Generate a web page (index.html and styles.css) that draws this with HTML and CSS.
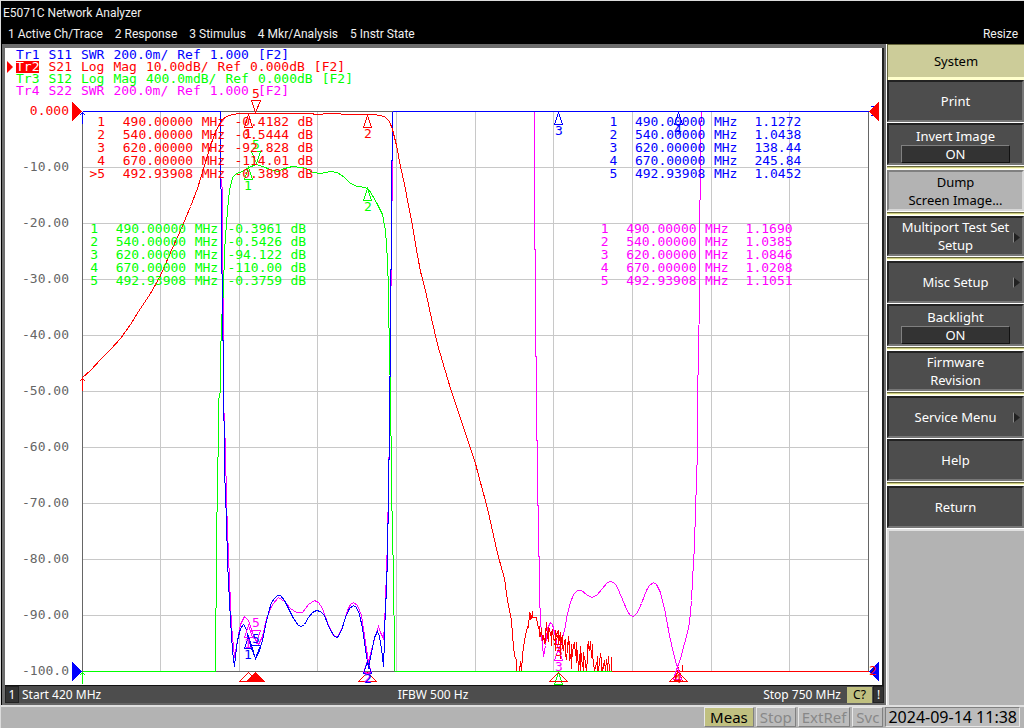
FILE: index.html
```html
<!DOCTYPE html>
<html lang="en">
<head>
<meta charset="utf-8">
<title>E5071C Network Analyzer</title>
<link rel="stylesheet" href="styles.css">
</head>
<body>
<div class="app">
<header class="top">
  <h1 class="title">E5071C Network Analyzer</h1>
  <nav class="menubar">
    <button>1 Active Ch/Trace</button>
    <button>2 Response</button>
    <button>3 Stimulus</button>
    <button>4 Mkr/Analysis</button>
    <button>5 Instr State</button>
    <button class="resize">Resize</button>
  </nav>
</header>

<div class="work">
  <main class="display">
    <div class="chart">
      <svg class="plot" viewBox="5 48 877 637" role="img" aria-label="S-parameter traces, 420 MHz to 750 MHz">
        <g class="labels">
          <text class="red" x="69" y="115">0.000</text>
          <text x="69" y="171">-10.00</text>
          <text x="69" y="227">-20.00</text>
          <text x="69" y="283">-30.00</text>
          <text x="69" y="339">-40.00</text>
          <text x="69" y="395">-50.00</text>
          <text x="69" y="451">-60.00</text>
          <text x="69" y="507">-70.00</text>
          <text x="69" y="563">-80.00</text>
          <text x="69" y="619">-90.00</text>
          <text x="69" y="675">-100.0</text>
        </g>
        <g class="lines" transform="translate(.5 .5)">
          <path class="grid" d="M160 111V671M239 111V671M317 111V671M396 111V671M475 111V671M553 111V671M632 111V671M711 111V671M789 111V671M82 167H868M82 223H868M82 279H868M82 335H868M82 391H868M82 447H868M82 503H868M82 559H868M82 615H868"/>
          <path class="frame" d="M82 111V671M868 111V671M220 111H392M215 671H394"/>

          <path class="magenta" d="M220 111V175L222 190V270L223 300V400L225 450 226 500 227 530 229 580 231 625 234 657 237 640 240 624 244 616 248 620 252 632 256 641 258 644 262 636 266 618 272 604 278 597 284 601 290 608 296 612 302 612 308 604 314 600 318 602 322 608 328 625 333 635 337 637 342 627 347 610 350 604 353 602 357 605 361 615 364 635 368 662 371 650 375 635 378 626 380 632 383 638 384 625 385 600 387 540 389 430 390 330 392 159V111"/>
          <path class="magenta" d="M534 111V249H535V356H536V440H537V505H538V556H539V596L540 618 541 635 543 656 545 645 547 628 550 622 552 624 555 636 558 650 561 642 564 630 567 613 570 602 573 594 577 590 581 590 586 594 591 597 596 595 602 588 607 582 610 581 613 582 616 585 622 599 627 611 630 615 633 616 637 612 641 603 646 590 649 585 653 582 656 584 660 592 664 608 669 635 674 657 677 667 680 658 684 643 687 632 689 622 691 600 692 580 694 545 695 510 697 450V400L699 300V210L700 190V130L701 111"/>
          <path class="green" d="M215 671V608L216 607V540L218 430V400L220 390V360L221 322 223 290 224 250 227 210 229 190 232 177 236 173 242 171 248 167 256 164 262 166 270 169 277 171 284 168 292 166 300 167 306 168 312 172 320 173 330 171 337 172 344 177 350 183 357 186 365 187 369 190 376 202 382 214 385 230 387 260 388 290V307L389 347 390 401 391 468 392 552 393 556 394 671"/>
          <path class="blue" d="M220 111V187L221 190V272L222 275V340H223V420L224 421V470L226 520 227 560 228 582 229 600 230 620 232 650 234 666 235 655 237 640 240 628 243 624 245 627 248 638 251 648 255 658 259 650 262 640 265 625 268 612 271 602 274 598 277 595 280 595 284 600 288 608 293 618 298 625 301 626 304 624 308 617 312 612 316 610 320 611 324 615 329 628 334 636 337 637 341 630 345 617 349 608 353 605 356 607 359 614 362 628 365 649 368 668 371 652 374 637 377 631 379 636 381 648 383 666 384 640 385 600 386 596V571H387V523H388V459H389V376H390V269H391V160H392V111"/>
          <path class="red" d="M82 377L90 370 100 359 110 349 120 338 130 324 138 311 150 293 160 275 170 252 180 230 190 206 197 188 204 165 210 145 216 129 222 119 226 116 232 114 240 113H310L316 114 330 113 350 114H374L384 116 389 121 392 129 396 145 400 166 404 184 408 205 412 225 417 255 420 271 425 290 431 318 437 344 450 388 463 427 475 463 477 471 487 508 493 535 497 553 504 578 507 600 511 620 512 635 514 655 516 660V671H519L520 661 521 671 522 655 523 646 525 635 527 626 528 627 529 612 530 613 531 618 532 611V617H536L537 624 539 630 540 636 541 628 542 640 543 635 544 643 546 622 547 638 549 628 550 634 552 630 553 639 555 640 556 634 558 630V644L560 632 561 640 563 650 564 640 566 659 568 636 569 652 571 660 573 645 574 642 575 655 577 650 578 671 580 648 582 666 584 656 586 671 588 641 589 650 590 641 591 657 592 654 594 671 596 662 598 670 600 653 602 671 604 660 605 671 606 659 607 670 608 656 609 671M682 664V671M530 612V619M545 630V642M560 636V658M571 643V668M576 641V662M583 651V671M601 656V671"/>
          <path class="red" d="M539 625V636M548 626V641M551 631V645M555 629V650M562 634V648M565 638V656M569 640V660M580 645V671M587 643V660M592 643V658M597 655V671M611 656V671"/>
          <g class="limits">
            <path class="blue" d="M82 111H220M392 111H868"/>
            <path class="green" d="M82 671H215M394 671H611"/>
            <path class="red" d="M611 671H868"/>
          </g>

          <path class="red" d="M248 114L244 127H252ZM251 100H260L255 112ZM367 115L363 127H371ZM558 633L554 644H562ZM678 668L674 681H682Z"/>
          <path class="green" d="M251 151H260L256 163ZM248 167L244 179H252ZM367 188L363 200H371ZM558 672L554 684H562Z"/>
          <path class="magenta" d="M251 630H260L256 642ZM248 625L244 637H252ZM367 660L363 672H371ZM558 648L554 660H562ZM677 666L673 679H681Z"/>
          <path class="blue" d="M251 645H260L255 658ZM248 636L244 648H252ZM367 661L363 673H371ZM558 112L554 124H562ZM678 112L674 124H682Z"/>
          <path class="red" d="M248 672L239 681H257ZM367 672L358 681H376ZM558 672L549 681H567ZM678 672L669 681H687Z"/>
          <path class="fill-red" d="M255 672L246 681H264Z"/>
          <path class="blue" d="M82 123V111M79 115L82 112 85 115M870 106H873M870 115H873"/>
          <path class="fill-red" d="M72 102L81 111 72 120ZM878 102L869 111 878 120Z"/>
          <path class="fill-blue" d="M72 662L81 671 72 680ZM878 662L869 671 878 680Z"/>
          <path class="green" d="M82 683V671M79 675L82 672 85 675"/>
          <path class="red" d="M82 390V378M79 381L82 378 85 381"/>
        </g>
        <g class="marks">
          <text class="red" x="256" y="98">5</text>
          <text class="red" x="248" y="138">1</text>
          <text class="red" x="368" y="138">2</text>
          <text class="red" x="559" y="656">3</text>
          <text class="red" x="678" y="683">4</text>
          <text class="red" x="873" y="675">2</text>
          <text class="green" x="256" y="149">5</text>
          <text class="green" x="248" y="190">1</text>
          <text class="green" x="368" y="211">2</text>
          <text class="magenta" x="256" y="627">5</text>
          <text class="magenta" x="248" y="648">1</text>
          <text class="magenta" x="368" y="682">2</text>
          <text class="magenta" x="559" y="671">3</text>
          <text class="blue" x="256" y="643">5</text>
          <text class="blue" x="248" y="659">1</text>
          <text class="blue" x="368" y="683">2</text>
          <text class="blue" x="559" y="135">3</text>
          <text class="blue" x="678" y="134">4</text>
        </g>
      </svg>

      <ul class="traces">
        <li class="blue"><span>Tr1</span> <span>S11</span> <span>SWR</span> <span>200.0m/</span> <span>Ref</span> <span>1.000</span> <span>[F2]</span></li>
        <li class="red active"><span>Tr2</span> <span>S21</span> <span>Log</span> <span>Mag</span> <span>10.00dB/</span> <span>Ref</span> <span>0.000dB</span> <span>[F2]</span></li>
        <li class="green"><span>Tr3</span> <span>S12</span> <span>Log</span> <span>Mag</span> <span>400.0mdB/</span> <span>Ref</span> <span>0.000dB</span> <span>[F2]</span></li>
        <li class="magenta"><span>Tr4</span> <span>S22</span> <span>SWR</span> <span>200.0m/</span> <span>Ref</span> <span>1.000</span> <span>[F2]</span></li>
      </ul>

      <table class="markers at-s21 red">
        <tr><td>1</td><td>490.00000</td><td>MHz</td><td>-0.4182</td><td>dB</td></tr>
        <tr><td>2</td><td>540.00000</td><td>MHz</td><td>-0.5444</td><td>dB</td></tr>
        <tr><td>3</td><td>620.00000</td><td>MHz</td><td>-92.828</td><td>dB</td></tr>
        <tr><td>4</td><td>670.00000</td><td>MHz</td><td>-114.01</td><td>dB</td></tr>
        <tr><td>&gt;5</td><td>492.93908</td><td>MHz</td><td>-0.3898</td><td>dB</td></tr>
      </table>
      <table class="markers at-s12 green">
        <tr><td>1</td><td>490.00000</td><td>MHz</td><td>-0.3961</td><td>dB</td></tr>
        <tr><td>2</td><td>540.00000</td><td>MHz</td><td>-0.5426</td><td>dB</td></tr>
        <tr><td>3</td><td>620.00000</td><td>MHz</td><td>-94.122</td><td>dB</td></tr>
        <tr><td>4</td><td>670.00000</td><td>MHz</td><td>-110.00</td><td>dB</td></tr>
        <tr><td>5</td><td>492.93908</td><td>MHz</td><td>-0.3759</td><td>dB</td></tr>
      </table>
      <table class="markers at-s11 blue">
        <tr><td>1</td><td>490.00000</td><td>MHz</td><td>1.1272</td></tr>
        <tr><td>2</td><td>540.00000</td><td>MHz</td><td>1.0438</td></tr>
        <tr><td>3</td><td>620.00000</td><td>MHz</td><td>138.44</td></tr>
        <tr><td>4</td><td>670.00000</td><td>MHz</td><td>245.84</td></tr>
        <tr><td>5</td><td>492.93908</td><td>MHz</td><td>1.0452</td></tr>
      </table>
      <table class="markers at-s22 magenta">
        <tr><td>1</td><td>490.00000</td><td>MHz</td><td>1.1690</td></tr>
        <tr><td>2</td><td>540.00000</td><td>MHz</td><td>1.0385</td></tr>
        <tr><td>3</td><td>620.00000</td><td>MHz</td><td>1.0846</td></tr>
        <tr><td>4</td><td>670.00000</td><td>MHz</td><td>1.0208</td></tr>
        <tr><td>5</td><td>492.93908</td><td>MHz</td><td>1.1051</td></tr>
      </table>
    </div>
    <div class="sweep">
      <span class="channel">1</span>
      <span class="start">Start 420 MHz</span>
      <span class="ifbw">IFBW 500 Hz</span>
      <span class="stop">Stop 750 MHz</span>
      <span class="cal">C?</span>
      <span class="warn">!</span>
    </div>
  </main>

  <aside class="softkeys">
    <h2 class="heading">System</h2>
    <button class="key">Print</button>
    <button class="key toggle split">Invert Image<span class="state">ON</span></button>
    <button class="key pair light split">Dump<br>Screen Image...</button>
    <button class="key pair sub split">Multiport Test Set<br>Setup</button>
    <button class="key sub">Misc Setup</button>
    <button class="key toggle split">Backlight<span class="state">ON</span></button>
    <button class="key pair split">Firmware<br>Revision</button>
    <button class="key sub">Service Menu</button>
    <button class="key split">Help</button>
    <button class="key">Return</button>
    <div class="blank"></div>
  </aside>
</div>

<footer class="status">
  <span class="lamp on">Meas</span>
  <span class="lamp">Stop</span>
  <span class="lamp">ExtRef</span>
  <span class="lamp">Svc</span>
  <time class="lamp clock" datetime="2024-09-14T11:38">2024-09-14 11:38</time>
</footer>
</div>
</body>
</html>
```
FILE: styles.css
```css
* { box-sizing: border-box; }

body {
  margin: 0;
  background: #b3b3b3;
  font-family: "Noto Sans", "Open Sans", sans-serif;
}

button { font: inherit; color: inherit; margin: 0; }

.app {
  min-height: 100vh;
  display: flex;
  flex-direction: column;
  border-top: 1px solid #dcdcdc;
  border-left: 1px solid #dcdcdc;
}

.red { color: #f00; }
.green { color: #0f0; }
.blue { color: #00f; }
.magenta { color: #f0f; }

/* Title and menu */
.top {
  background: #000;
  color: #f0f0f0;
  padding: 2px 6px 0 2px;
  font-family: Roboto, "Open Sans", sans-serif;
  font-size: 12px;
}
.title { margin: 0; font-size: 12px; font-weight: 400; line-height: 20px; }
.menubar { display: flex; gap: 12px; margin-top: 1px; padding-left: 5px; }
.menubar button {
  border: 0;
  padding: 0;
  background: none;
  line-height: 20px;
  white-space: nowrap;
}
.menubar .resize { margin-left: auto; }

/* Work area */
.work { display: flex; flex: 1; background: #000; }
.display {
  flex: 1;
  min-width: 0;
  margin-left: 1px;
  border: solid #6e6e6e;
  border-width: 4px 2px 0 3px;
}
.chart {
  position: relative;
  background: #fff;
  border-right: 2px solid #202020;
  border-bottom: 1px solid #111;
  font-family: "DejaVu Sans Mono", "Liberation Mono", monospace;
  font-size: 13px;
}
.plot { display: block; width: 100%; height: auto; }
.plot text { font-size: 13px; fill: currentColor; }
.labels { text-anchor: end; color: #666; }
.marks { text-anchor: middle; }
.lines { fill: none; stroke-width: 1; shape-rendering: crispEdges; }
.lines path { stroke: currentColor; }
.lines .grid { stroke: #c8c8c8; }
.lines .frame { stroke: #666; }
.lines .fill-red { fill: #f00; stroke: #f00; }
.lines .fill-blue { fill: #00f; stroke: #00f; }

.traces {
  position: absolute;
  top: 1px;
  left: 1px;
  margin: 0;
  padding: 0;
  list-style: none;
}
.traces li {
  display: flex;
  gap: 9px;
  padding-left: 10px;
  line-height: 12px;
  white-space: nowrap;
}
.traces .active { position: relative; }
.traces .active::before {
  content: "";
  position: absolute;
  left: 1px;
  top: 0;
  border: solid transparent;
  border-width: 6px 0 6px 6px;
  border-left-color: #f00;
}
.traces .active span:first-child { background: #f00; color: #fff; }

.markers { position: absolute; border-collapse: collapse; }
.markers td {
  padding: 0;
  line-height: 13px;
  text-align: right;
  white-space: nowrap;
}
.markers td:nth-child(1) { min-width: 16px; }
.markers td:nth-child(2) { min-width: 88px; }
.markers td:nth-child(3) { min-width: 32px; }
.markers td:nth-child(4) { min-width: 64px; }
.markers td:nth-child(5) { min-width: 24px; }
.at-s21 { left: 9.6%; top: 10.5%; }
.at-s12 { left: 8.8%; top: 27.3%; }
.at-s11 { left: 68%; top: 10.5%; }
.at-s22 { left: 67%; top: 27.3%; }

/* Sweep line under the chart */
.sweep {
  display: grid;
  grid-template-columns: 14px 1fr auto 1fr 25px 12px;
  align-items: center;
  height: 19px;
  background: #4d4d4d;
  border-bottom: 2px solid #666;
  color: #fff;
  font-size: 12px;
  line-height: 16px;
}
.channel, .warn { background: #333; border: 1px solid #222; text-align: center; line-height: 15px; }
.start { padding-left: 3px; }
.stop { text-align: right; padding-right: 6px; }
.cal { background: #c0c080; color: #000; text-align: center; }
.warn { margin-left: 1px; }

/* Softkeys */
.softkeys {
  flex: none;
  width: 138px;
  display: flex;
  flex-direction: column;
  padding-left: 1px;
  background: #fff;
  font-size: 13px;
  line-height: 18px;
}
.heading {
  margin: 0;
  height: 36px;
  background: #cccc99;
  border: solid #66663c;
  border-width: 1px 0 0 1px;
  box-shadow: inset 0 -3px #ffffcc;
  color: #000;
  font-size: 13px;
  font-weight: 400;
  line-height: 33px;
  text-align: center;
}
.key {
  position: relative;
  width: 100%;
  min-height: 42px;
  margin-bottom: 1px;
  padding: 0;
  border: 2px solid;
  border-color: #222 #777 #777 #222;
  background: #4d4d4d;
  color: #fff;
  line-height: 18px;
  text-align: center;
}
.pair { min-height: 40px; }
.toggle { padding-top: 2px; }
.split { margin-bottom: 5px; }
.split::after {
  content: "";
  position: absolute;
  left: -2px;
  right: -2px;
  bottom: -6px;
  height: 3px;
  background: linear-gradient(#66663c 1px, #cccc80 1px 2px, #ffffcc 2px);
}
.light { min-height: 41px; background: #b3b3b3; border-color: #808080 #d8d8d8 #d8d8d8 #808080; color: #000; }
.state {
  display: block;
  margin: 0 12px;
  border: 1px solid;
  border-color: #808080 #111 #111 #808080;
  background: #333;
  line-height: 16px;
}
.sub::before {
  content: "";
  position: absolute;
  right: 2px;
  top: 14px;
  width: 6px;
  height: 11px;
  background: #222;
  border-left: 1px solid #888;
  clip-path: polygon(0 0, 100% 50%, 0 100%);
}
.blank {
  flex: 1;
  background: #b3b3b3;
  border: solid #e0e0e0;
  border-width: 2px 0 0 2px;
}

/* Instrument status */
.status {
  display: flex;
  gap: 2px;
  justify-content: flex-end;
  padding: 0 4px 1px 0;
  border-top: 2px solid #e0e0e0;
  background: #b3b3b3;
  font-size: 15px;
  line-height: 18px;
}
.lamp {
  padding: 0 3px;
  background: #bcbcbc;
  border: 1px solid;
  border-color: #e8e8e8 #808080 #808080 #e8e8e8;
  color: #888;
}
.on { padding: 0 5px; background: #c0c080; color: #000; }
.clock { padding: 0 2px; border-color: #808080 #e8e8e8 #e8e8e8 #808080; color: #000; font-size: 16px; }
```
